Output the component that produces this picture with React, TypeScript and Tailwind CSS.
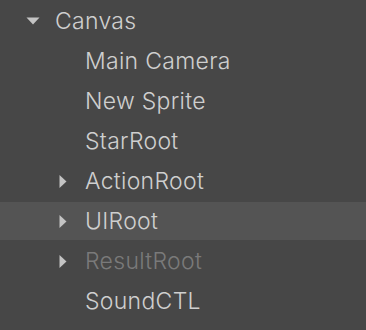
const rows = [
  { name: 'Canvas', depth: 0, arrow: 'down' },
  { name: 'Main Camera', depth: 1 },
  { name: 'New Sprite', depth: 1 },
  { name: 'StarRoot', depth: 1 },
  { name: 'ActionRoot', depth: 1, arrow: 'right' },
  { name: 'UIRoot', depth: 1, arrow: 'right', selected: true },
  { name: 'ResultRoot', depth: 1, arrow: 'right', disabled: true },
  { name: 'SoundCTL', depth: 1 },
]

function Arrow({ dir }: { dir?: string }) {
  if (dir === 'down')
    return (
      <svg width="14" height="8" viewBox="0 0 14 8" className="text-[#c4c4c4]">
        <path d="M0.5 0.5 H13.5 L7 7.5 Z" fill="currentColor" />
      </svg>
    )
  if (dir === 'right')
    return (
      <svg width="8" height="13" viewBox="0 0 8 13" className="text-[#c4c4c4]">
        <path d="M0.5 0 V13 L7.5 6.5 Z" fill="currentColor" />
      </svg>
    )
  return null
}

export default function App() {
  return (
    <div
      className="h-[330px] w-[366px] overflow-hidden bg-[#474747] pt-px"
      style={{ fontFamily: 'Inter, "Noto Sans", sans-serif' }}
    >
      {rows.map((r) => (
        <div key={r.name} className="h-10 py-px">
          <div
            className={`flex h-[38px] items-center ${r.selected ? 'bg-[#545454]' : ''}`}
          >
            <div
              className={`flex shrink-0 items-center justify-start ${
                r.depth === 0 ? 'ml-[26px] w-[29px]' : 'ml-[59px] w-[26px]'
              }`}
            >
              <Arrow dir={r.arrow} />
            </div>
            <span
              className={`pt-px text-[23px] font-[350] leading-none tracking-[0.3px] ${
                r.disabled ? 'text-[#7a7a7a]' : 'text-[#cfcfcf]'
              }`}
            >
              {r.name}
            </span>
          </div>
        </div>
      ))}
    </div>
  )
}
